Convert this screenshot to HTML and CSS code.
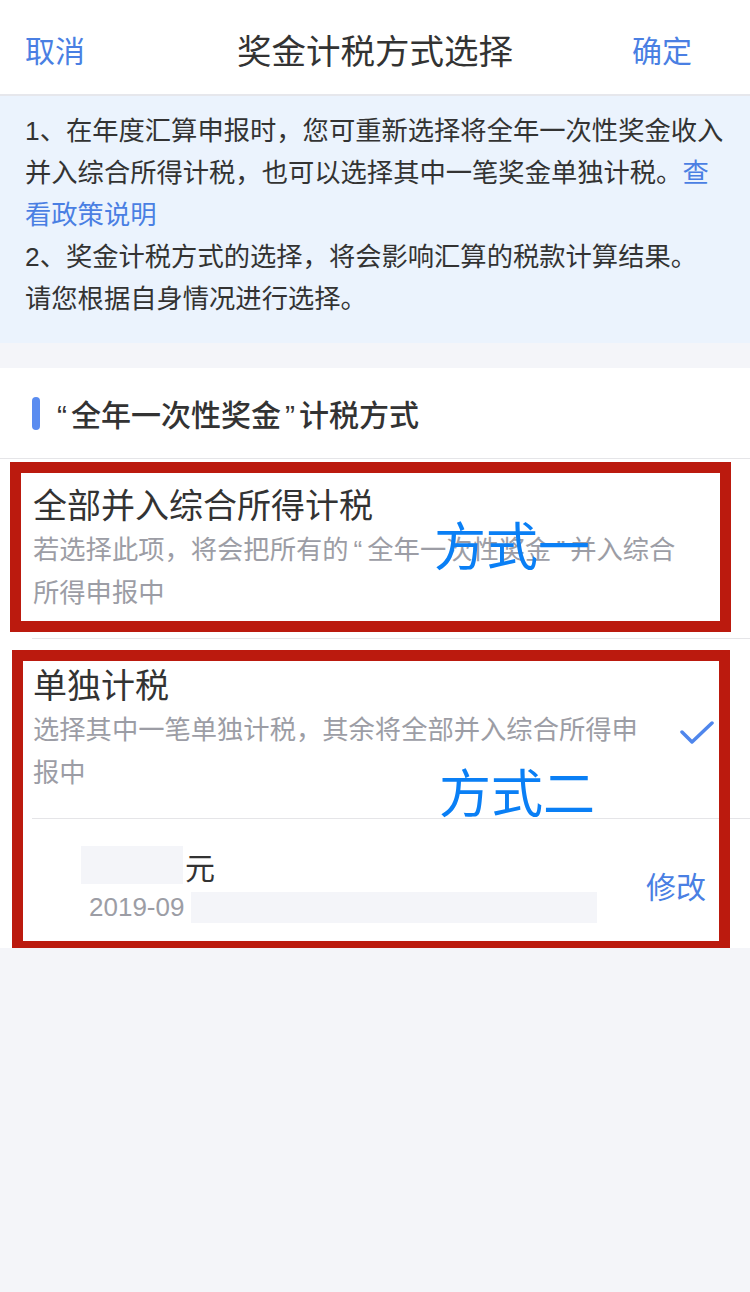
FILE: index.html
```html
<!DOCTYPE html>
<html lang="zh-CN">
<head>
    <meta charset="UTF-8">
    <meta name="viewport" content="width=device-width, initial-scale=1.0">
    <title>奖金计税方式选择</title>
    <link rel="stylesheet" href="styles.css">
</head>
<body>
    <header class="nav">
        <span class="nav-btn nav-left">取消</span>
        <span class="nav-title">奖金计税方式选择</span>
        <span class="nav-btn nav-right">确定</span>
    </header>

    <div class="notice">
        1、在年度汇算申报时，您可重新选择将全年一次性奖金收入并入综合所得计税，也可以选择其中一笔奖金单独计税。<a class="link">查看政策说明</a><br>
        2、奖金计税方式的选择，将会影响汇算的税款计算结果。<br>请您根据自身情况进行选择。
    </div>

    <div class="sheet">
        <div class="sheet-head">
            <span class="bar"></span>
            <span class="sheet-title"><span class="q">“</span>全年一次性奖金<span class="q">”</span>计税方式</span>
        </div>

        <div class="option">
            <div class="option-body">
                <div class="option-title">全部并入综合所得计税</div>
                <div class="option-desc wide">若选择此项，将会把所有的<span class="q">“</span>全年一次性奖金<span class="q">”</span>并入综合所得申报中</div>
            </div>
        </div>

        <div class="option">
            <div class="option-body">
                <div class="option-title">单独计税</div>
                <div class="option-desc">选择其中一笔单独计税，其余将全部并入综合所得申报中</div>
            </div>
            <svg class="check" width="34" height="24" viewBox="0 0 34 24">
                <path d="M2 11 L12 21 L32 2" fill="none" stroke="#4f86ec" stroke-width="3.5" stroke-linecap="round" stroke-linejoin="round"/>
            </svg>
        </div>

        <div class="amount-row">
            <div class="amount-info">
                <div class="amount-line">
                    <span class="mask mask-amount"></span>
                    <span class="unit">元</span>
                </div>
                <div class="date-line">
                    <span class="date">2019-09</span>
                    <span class="mask mask-date"></span>
                </div>
            </div>
            <span class="edit">修改</span>
        </div>

        <!-- annotation overlays -->
        <div class="mark mark-one"></div>
        <div class="mark mark-two"></div>
        <span class="tag tag-one">方式一</span>
        <span class="tag tag-two">方式二</span>
    </div>
</body>
</html>
```

FILE: styles.css
```css
body {
    margin: 0;
    background-color: #f4f5f9;
    font-family: "Liberation Sans", "Noto Sans CJK SC", sans-serif;
    color: #333;
}
.nav {
    display: grid;
    grid-template-columns: 1fr auto 1fr;
    align-items: center;
    height: 96px;
    padding: 4px 25px 0;
    box-sizing: border-box;
    background-color: #fff;
    border-bottom: 2px solid #e6e7ec;
}
.nav-btn {
    font-size: 30px;
    color: #4a7fe3;
}
.nav-right {
    text-align: right;
    padding-right: 33px;
}
.nav-title {
    font-size: 34.5px;
    color: #333;
}
.notice {
    background-color: #ebf3fd;
    padding: 14px 20px 23px 25px;
    font-size: 26.3px;
    line-height: 42px;
    color: #333;
}
.link {
    color: #4a7fe3;
}
.q {
    padding: 0 4px;
}
.sheet {
    position: relative;
    margin-top: 25px;
    background-color: #fff;
}
.sheet-head {
    display: flex;
    align-items: center;
    height: 90px;
    padding-left: 32px;
    border-bottom: 1px solid #e5e5e8;
}
.bar {
    width: 8px;
    height: 33px;
    border-radius: 4px;
    background-color: #5a8cf0;
    margin-right: 13px;
}
.sheet-title {
    font-size: 30px;
    font-weight: 500;
    color: #333;
}
.option {
    display: flex;
    align-items: flex-start;
    margin-left: 32px;
    padding: 24px 0 23px 1px;
    border-bottom: 1px solid #e5e5e8;
}
.option-title {
    font-size: 34px;
    line-height: 46px;
    color: #333;
}
.option-desc {
    width: 612px;
    font-size: 26.3px;
    line-height: 43px;
    color: #9c9da5;
}
.option-desc.wide {
    width: 650px;
}
.option-desc .q {
    padding: 0 5px;
}
.check {
    margin: 58px 0 0 35px;
}
.amount-row {
    display: flex;
    align-items: center;
    height: 129px;
    padding: 2px 44px 0 81px;
    box-sizing: border-box;
}
.amount-info {
    flex: 1;
}
.amount-line {
    display: flex;
    align-items: flex-end;
}
.mask {
    display: inline-block;
    background-color: #f4f5f9;
}
.mask-amount {
    width: 102px;
    height: 38px;
}
.unit {
    font-size: 30px;
    line-height: 30px;
    margin-left: 2px;
    color: #333;
}
.date-line {
    display: flex;
    align-items: center;
    margin-top: 8px;
    padding-left: 8px;
}
.date {
    font-size: 26px;
    line-height: 31px;
    color: #9c9da5;
}
.mask-date {
    width: 406px;
    height: 31px;
    margin-left: 7px;
}
.edit {
    font-size: 30px;
    color: #4a7fe3;
}
.mark {
    position: absolute;
    box-sizing: border-box;
    border: 11px solid #bb1a0e;
}
.mark-one {
    left: 10px;
    top: 94px;
    width: 721px;
    height: 170px;
}
.mark-two {
    left: 12px;
    top: 282px;
    width: 718px;
    height: 302px;
}
.tag {
    position: absolute;
    font-size: 52px;
    line-height: 52px;
    color: #0a7ff5;
}
.tag-one {
    left: 434px;
    top: 154px;
}
.tag-two {
    left: 439px;
    top: 401px;
}
```
